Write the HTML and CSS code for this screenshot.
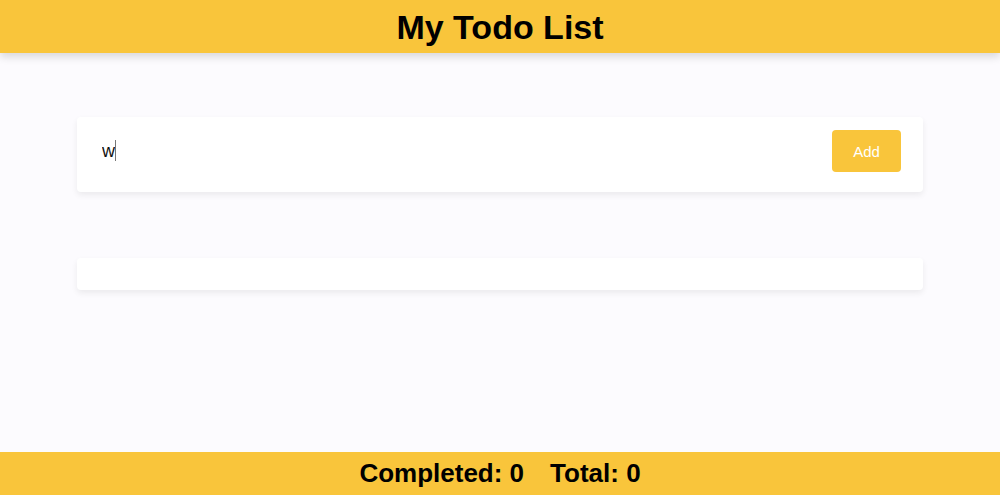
FILE: index.html
```html
<!DOCTYPE html>
<html>
<head>
<meta charset="utf-8">
<link rel="stylesheet" href="styles.css">
</head>
<body>
<header class="topbar"><h1 class="title">My Todo List</h1></header>
<main class="content">
  <div class="card add-card">
    <div class="input-wrap">
      <input class="todo-input" type="text" value="w" autofocus>
      <span class="caret"></span>
    </div>
    <button class="add-btn">Add</button>
  </div>
  <div class="card list-card"></div>
</main>
<footer class="bottombar">
  <span class="stat">Completed: 0</span>
  <span class="stat">Total: 0</span>
</footer>
</body>
</html>
```

FILE: styles.css
```css
html, body {
  margin: 0;
  padding: 0;
  height: 100%;
}
body {
  background: #fcfbfe;
  font-family: "Liberation Sans", Arial, sans-serif;
  display: flex;
  flex-direction: column;
}
.topbar {
  background: #f9c53b;
  height: 53px;
  display: flex;
  align-items: center;
  justify-content: center;
  box-shadow: 0 4px 8px rgba(0,0,0,0.14);
  position: relative;
  z-index: 1;
}
.title {
  margin: 0;
  padding-top: 2px;
  font-size: 34px;
  font-weight: bold;
  color: #000;
}
.content {
  flex: 1;
  width: 846px;
  margin: 0 auto;
  padding-top: 64px;
  display: flex;
  flex-direction: column;
  gap: 66px;
}
.card {
  background: #fff;
  border-radius: 4px;
  box-shadow: 0 3px 6px rgba(0,0,0,0.07);
}
.add-card {
  display: flex;
  align-items: center;
  padding: 13px 22px 20px 25px;
}
.input-wrap {
  flex: 1;
  position: relative;
  display: flex;
}
.todo-input {
  flex: 1;
  border: none;
  outline: none;
  background: transparent;
  font-family: "Liberation Sans", Arial, sans-serif;
  font-size: 18px;
  color: #111;
  padding: 0;
}
.caret {
  position: absolute;
  left: 13px;
  top: -1px;
  width: 1px;
  height: 21px;
  background: #777;
}
.add-btn {
  width: 69px;
  height: 42px;
  background: #f9c53b;
  color: #fff;
  border: none;
  border-radius: 4px;
  font-family: "Liberation Sans", Arial, sans-serif;
  font-size: 15px;
}
.list-card {
  height: 32px;
}
.bottombar {
  background: #f9c53b;
  height: 43px;
  display: flex;
  align-items: center;
  justify-content: center;
  gap: 26px;
}
.stat {
  font-size: 26px;
  font-weight: bold;
  color: #000;
}
```
